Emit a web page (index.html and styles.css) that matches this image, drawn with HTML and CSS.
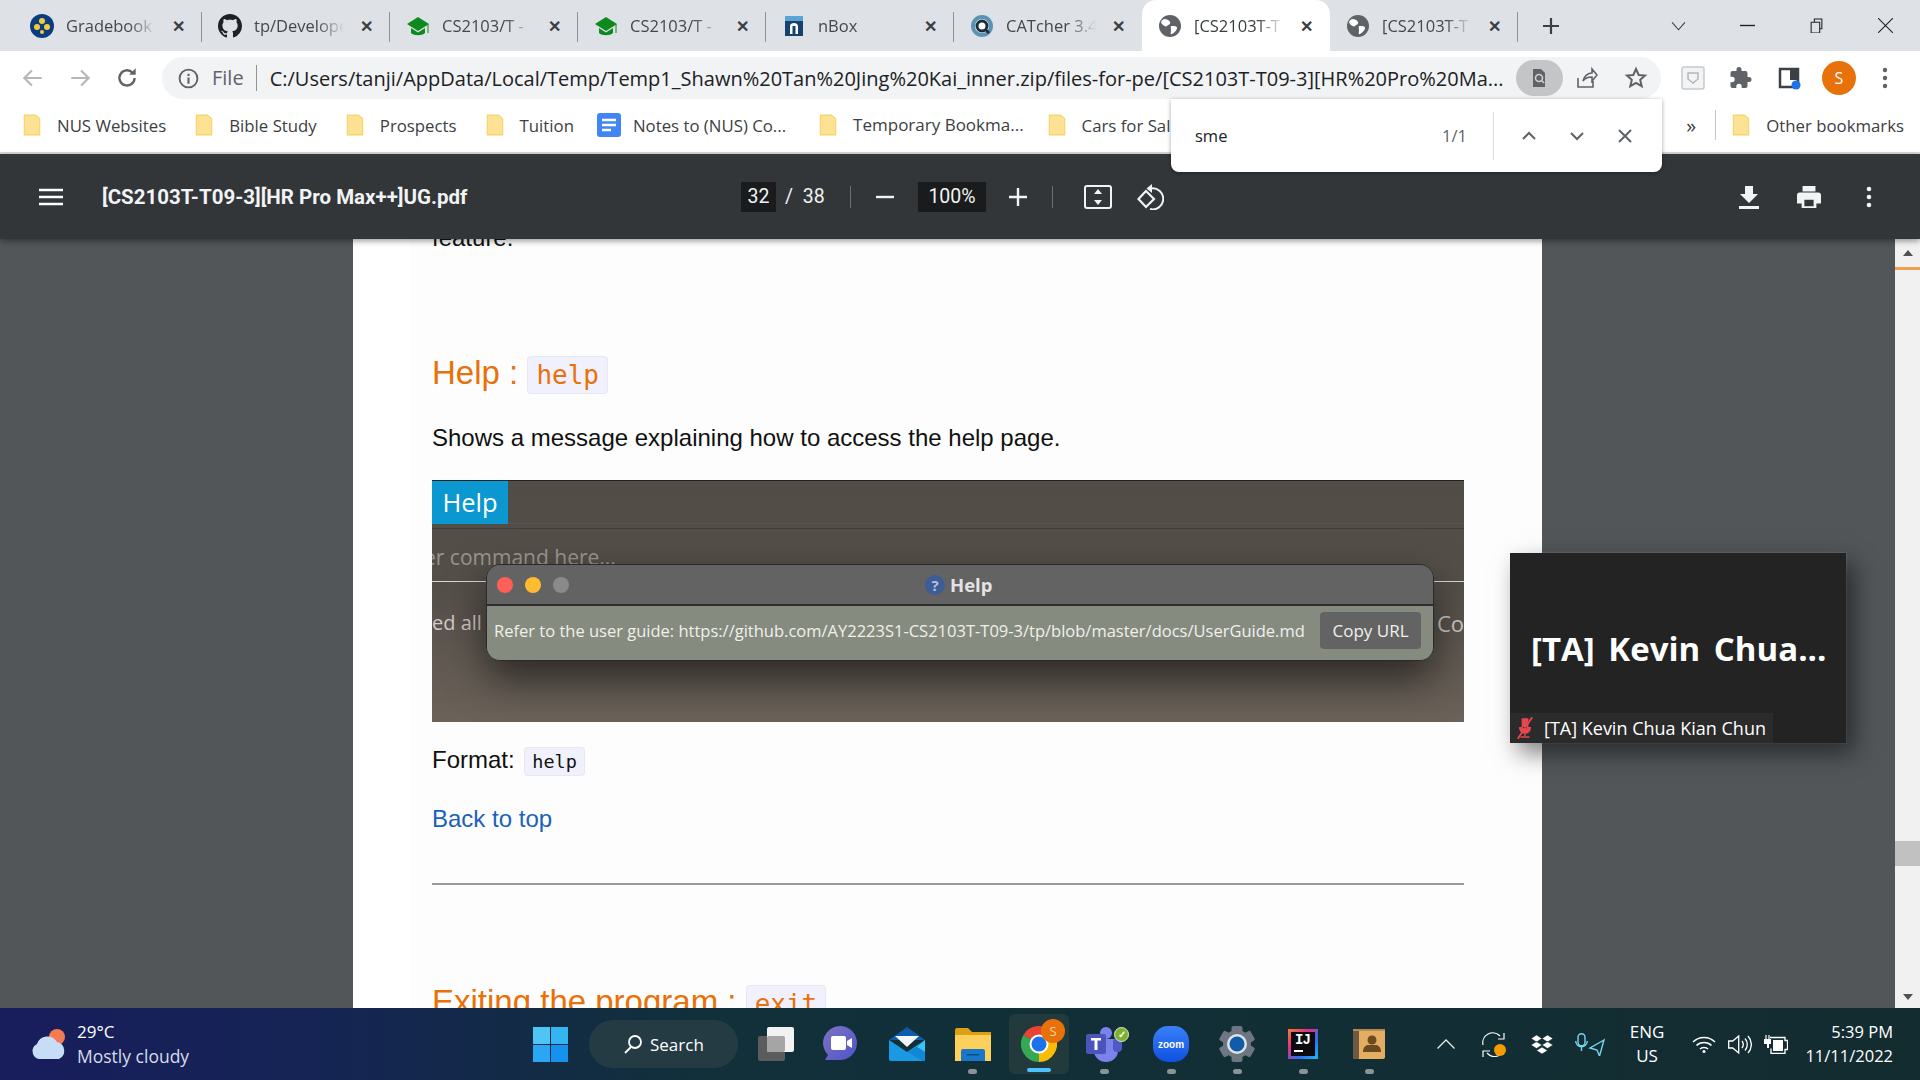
FILE: index.html

```html
<!DOCTYPE html>
<html lang="en">
<head>
    <meta charset="UTF-8" />
    <meta name="viewport" content="width=device-width, initial-scale=1.0"/>
    <title>[CS2103T-T09-3][HR Pro Max++]UG.pdf</title>
    <link rel="stylesheet" href="styles.css">
</head>
<body>

<!-- tab strip -->
<div class="tabstrip">
    <div class="tab sep">
        <svg class="fav" viewBox="0 0 24 24"><circle cx="12" cy="12" r="12" fill="#0b3c7d"/><circle cx="12" cy="7" r="3" fill="#f5c842"/><circle cx="7" cy="13" r="3" fill="#f5c842"/><circle cx="17" cy="13" r="3" fill="#f5c842"/><circle cx="12" cy="18" r="2" fill="#f5c842"/></svg>
        <span class="tab-title">Gradebook</span><span class="tab-x">✕</span>
    </div>
    <div class="tab sep">
        <svg class="fav" viewBox="0 0 16 16"><path fill="#202124" d="M8 0C3.58 0 0 3.58 0 8c0 3.54 2.29 6.53 5.47 7.59.4.07.55-.17.55-.38 0-.19-.01-.82-.01-1.49-2.01.37-2.53-.49-2.69-.94-.09-.23-.48-.94-.82-1.13-.28-.15-.68-.52-.01-.53.63-.01 1.08.58 1.23.82.72 1.21 1.87.87 2.33.66.07-.52.28-.87.51-1.07-1.78-.2-3.64-.89-3.64-3.95 0-.87.31-1.59.82-2.15-.08-.2-.36-1.02.08-2.12 0 0 .67-.21 2.2.82.64-.18 1.32-.27 2-.27s1.36.09 2 .27c1.53-1.04 2.2-.82 2.2-.82.44 1.1.16 1.92.08 2.12.51.56.82 1.27.82 2.15 0 3.07-1.87 3.75-3.65 3.95.29.25.54.73.54 1.48 0 1.07-.01 1.93-.01 2.2 0 .21.15.46.55.38A8.01 8.01 0 0 0 16 8c0-4.42-3.58-8-8-8z"/></svg>
        <span class="tab-title">tp/Develope</span><span class="tab-x">✕</span>
    </div>
    <div class="tab sep">
        <svg class="fav" viewBox="0 0 24 24"><path fill="#0c8a1e" d="M12 3 1 10l11 7 11-7z"/><path fill="#0c8a1e" d="M5 14v5c3 3 11 3 14 0v-5l-7 4.500z"/><path d="M22 10v9" stroke="#0c8a1e"/></svg>
        <span class="tab-title">CS2103/T -</span><span class="tab-x">✕</span>
    </div>
    <div class="tab sep">
        <svg class="fav" viewBox="0 0 24 24"><path fill="#0c8a1e" d="M12 3 1 10l11 7 11-7z"/><path fill="#0c8a1e" d="M5 14v5c3 3 11 3 14 0v-5l-7 4.500z"/><path d="M22 10v9" stroke="#0c8a1e"/></svg>
        <span class="tab-title">CS2103/T -</span><span class="tab-x">✕</span>
    </div>
    <div class="tab sep">
        <svg class="fav" viewBox="0 0 24 24"><path fill="#17426d" d="M3 2h18v20H3z"/><path fill="#5ba4d6" d="M3 2h18v5H3z"/><path fill="#fff" d="M8 20v-8c0-2 2-3 4-3s4 1 4 3v8h-2.500v-8h-3v8z"/></svg>
        <span class="tab-title">nBox</span><span class="tab-x">✕</span>
    </div>
    <div class="tab">
        <svg class="fav" viewBox="0 0 24 24"><circle cx="12" cy="12" r="11" fill="#5b93b5"/><circle cx="12" cy="12" r="7" fill="#fff"/><circle cx="12" cy="12" r="5" fill="none" stroke="#1d2b36" stroke-width="3"/><path d="m15 15 4 4" stroke="#1d2b36" stroke-width="2.500"/></svg>
        <span class="tab-title">CATcher 3.4</span><span class="tab-x">✕</span>
    </div>
    <div class="tab active">
        <svg class="fav" viewBox="0 0 24 24"><circle cx="12" cy="12" r="11" fill="#5f6368"/><path fill="#fff" d="M6 5c3 0 5 1 6 3s-2 3-3 4-3 0-5-2 0-4 2-5zm8 7c2 0 5 0 5 2s-3 5-5 6-1-2-1-4-1-4 1-4z"/></svg>
        <span class="tab-title">[CS2103T-T</span><span class="tab-x">✕</span>
    </div>
    <div class="tab sep">
        <svg class="fav" viewBox="0 0 24 24"><circle cx="12" cy="12" r="11" fill="#5f6368"/><path fill="#fff" d="M6 5c3 0 5 1 6 3s-2 3-3 4-3 0-5-2 0-4 2-5zm8 7c2 0 5 0 5 2s-3 5-5 6-1-2-1-4-1-4 1-4z"/></svg>
        <span class="tab-title">[CS2103T-T</span><span class="tab-x">✕</span>
    </div>
    <svg class="newtab" viewBox="0 0 18 18"><path d="M9 1v16M1 9h16" stroke="#3c4043" stroke-width="2.200"/></svg>
    <div class="winctl">
        <svg viewBox="0 0 14 14"><path d="m1 4 6 7 6-7" fill="none" stroke="#3c4043"/></svg>
        <svg viewBox="0 0 14 14"><path d="M0 7h14" stroke="#202124" stroke-width="1.300"/></svg>
        <svg viewBox="0 0 14 14"><path d="M2 4h8v10H2zM5 4V1h7v9h-2" fill="none" stroke="#202124"/></svg>
        <svg viewBox="0 0 14 14"><path d="m0 0 14 14M14 0 0 14" stroke="#202124"/></svg>
    </div>
</div>

<!-- address bar -->
<div class="toolbar">
    <svg class="navbtn" viewBox="0 0 24 24"><path d="M20 12H5m6-7-7 7 7 7" fill="none" stroke="#b4b7bb" stroke-width="2"/></svg>
    <svg class="navbtn" viewBox="0 0 24 24"><path d="M4 12h15m-6-7 7 7-7 7" fill="none" stroke="#b4b7bb" stroke-width="2"/></svg>
    <svg class="navbtn" viewBox="0 0 24 24"><path d="M19 12a7 7 0 1 1-2-5" fill="none" stroke="#5f6368" stroke-width="2.200"/><path d="M20 3v6h-6z" fill="#5f6368"/></svg>
    <div class="omnibox">
        <svg class="info" viewBox="0 0 20 20"><circle cx="10" cy="10" r="8.500" fill="none" stroke="#5f6368" stroke-width="1.800"/><path d="M10 9v6M10 5.500v2" stroke="#5f6368" stroke-width="2"/></svg>
        <span class="scheme">File</span>
        <span class="url">C:/Users/tanji/AppData/Local/Temp/Temp1_Shawn%20Tan%20Jing%20Kai_inner.zip/files-for-pe/[CS2103T-T09-3][HR%20Pro%20Ma...</span>
        <span class="lens"><svg viewBox="0 0 20 20"><path d="M4 1h8l4 4v14H4z" fill="#5f6368"/><circle cx="10" cy="10" r="3.500" fill="none" stroke="#d0d1d3" stroke-width="1.600"/><path d="m12.500 12.500 2.500 2.500" stroke="#d0d1d3" stroke-width="1.600"/></svg></span>
        <svg class="omni-ic share" viewBox="0 0 24 24"><path d="M4 12v9h15v-6M9 15c1-5 5-8 9-8V3l5 6-5 6v-4c-4 0-7 1-9 4z" fill="none" stroke="#5f6368" stroke-width="1.600"/></svg>
        <svg class="omni-ic star" viewBox="0 0 24 24"><path d="m12 3 2.700 6 6.300.6-4.800 4.200 1.500 6.400L12 17l-5.700 3.200 1.500-6.400L3 9.600 9.300 9z" fill="none" stroke="#5f6368" stroke-width="2"/></svg>
    </div>
    <div class="ext">
        <svg viewBox="0 0 24 24"><rect x="1" y="1" width="22" height="22" rx="2" fill="#f1f3f4" stroke="#c6c9cc" stroke-width="1.500"/><path d="M7 7h10v6l-5 4-5-4z" fill="none" stroke="#b4b7bb" stroke-width="1.500"/></svg>
        <svg viewBox="0 0 24 24"><path fill="#5f6368" d="M20 11h-1.500V7a2 2 0 0 0-2-2h-4V3.500a2.500 2.500 0 0 0-5 0V5h-4a2 2 0 0 0-2 2v3.800H3a2.700 2.700 0 0 1 0 5.400H1.500V20a2 2 0 0 0 2 2h3.800v-1.500a2.700 2.700 0 0 1 5.400 0V22h3.800a2 2 0 0 0 2-2v-4H20a2.500 2.500 0 0 0 0-5z"/></svg>
        <svg viewBox="0 0 24 24"><path d="M3 3h18v18H3z" fill="none" stroke="#3c4043" stroke-width="2.500"/><path d="M13 3h8v11h-8z" fill="#3c4043"/><circle cx="19" cy="19" r="4.500" fill="#1a73e8"/></svg>
        <span class="avatar">S</span>
        <svg class="dots" viewBox="0 0 6 24"><circle cx="3" cy="4" r="2.200" fill="#5f6368"/><circle cx="3" cy="12" r="2.200" fill="#5f6368"/><circle cx="3" cy="20" r="2.200" fill="#5f6368"/></svg>
    </div>
</div>

<!-- bookmarks -->
<div class="bookmarks">
    <span class="bm"><svg class="folder" viewBox="0 0 16 20"><path d="M1 1h10l4 3v15H1z" fill="#fde293" stroke="#f5d36c"/></svg>NUS Websites</span>
    <span class="bm"><svg class="folder" viewBox="0 0 16 20"><path d="M1 1h10l4 3v15H1z" fill="#fde293" stroke="#f5d36c"/></svg>Bible Study</span>
    <span class="bm"><svg class="folder" viewBox="0 0 16 20"><path d="M1 1h10l4 3v15H1z" fill="#fde293" stroke="#f5d36c"/></svg>Prospects</span>
    <span class="bm tuition"><svg class="folder" viewBox="0 0 16 20"><path d="M1 1h10l4 3v15H1z" fill="#fde293" stroke="#f5d36c"/></svg>Tuition</span>
    <span class="bm notes"><svg class="doc" viewBox="0 0 24 24"><rect width="24" height="24" rx="3" fill="#4285f4"/><path d="M5 7h14M5 12h14M5 17h9" stroke="#fff" stroke-width="2.500"/></svg>Notes to (NUS) Co...</span>
    <span class="bm temp"><svg class="folder" viewBox="0 0 16 20"><path d="M1 1h10l4 3v15H1z" fill="#fde293" stroke="#f5d36c"/></svg>Temporary Bookma...</span>
    <span class="bm"><svg class="folder" viewBox="0 0 16 20"><path d="M1 1h10l4 3v15H1z" fill="#fde293" stroke="#f5d36c"/></svg>Cars for Sal</span>
    <span class="bm-more">»</span>
    <span class="bm-sep"></span>
    <span class="bm other"><svg class="folder" viewBox="0 0 16 20"><path d="M1 1h10l4 3v15H1z" fill="#fde293" stroke="#f5d36c"/></svg>Other bookmarks</span>
</div>

<!-- find in page -->
<div class="findbar">
    <span class="find-q">sme</span>
    <span class="find-n">1/1</span>
    <span class="find-sep"></span>
    <svg viewBox="0 0 16 16"><path d="m2 11 6-6 6 6" fill="none" stroke="#5f6368" stroke-width="2"/></svg>
    <svg viewBox="0 0 16 16"><path d="m2 5 6 6 6-6" fill="none" stroke="#5f6368" stroke-width="2"/></svg>
    <svg viewBox="0 0 16 16"><path d="m2 2 12 12M14 2 2 14" stroke="#5f6368" stroke-width="2"/></svg>
</div>

<!-- pdf toolbar -->
<div class="pdfbar">
    <svg class="pdf-menu" viewBox="0 0 24 18"><path d="M0 2h24M0 9h24M0 16h24" stroke="#fff" stroke-width="2.500"/></svg>
    <span class="pdf-title">[CS2103T-T09-3][HR Pro Max++]UG.pdf</span>
    <span class="pdf-box page-no">32</span>
    <span class="pdf-total">/&nbsp; 38</span>
    <span class="pdf-sep first"></span>
    <svg class="pdf-ic minus" viewBox="0 0 18 18"><path d="M0 9h18" stroke="#f1f3f4" stroke-width="2.400"/></svg>
    <span class="pdf-box zoom">100%</span>
    <svg class="pdf-ic plus" viewBox="0 0 18 18"><path d="M0 9h18M9 0v18" stroke="#f1f3f4" stroke-width="2.400"/></svg>
    <span class="pdf-sep second"></span>
    <svg class="pdf-ic fit" viewBox="0 0 28 24"><rect x="1" y="1" width="26" height="22" rx="2" fill="none" stroke="#f1f3f4" stroke-width="2"/><path d="m14 4 4 5h-8zM14 20l4-5h-8z" fill="#f1f3f4"/></svg>
    <svg class="pdf-ic rotate" viewBox="0 0 27 26"><path d="M9 7 1.500 15 9 23l8-8z" fill="none" stroke="#f1f3f4" stroke-width="2.200"/><path d="M14 4.500A10.500 10.500 0 1 1 13 25" fill="none" stroke="#f1f3f4" stroke-width="2"/><path d="M15 0 9.500 4.500 15 9z" fill="#f1f3f4"/></svg>
    <span class="pdf-spacer"></span>
    <svg class="pdf-ic right" viewBox="0 0 22 24"><path d="M7 1h8v8h5L11 18 2 9h5zM1 21h20v3H1z" fill="#f1f3f4"/></svg>
    <svg class="pdf-ic right print" viewBox="0 0 26 24"><path d="M6 0h14v6H6zM3 7h20a3 3 0 0 1 3 3v9h-5v5H5v-5H0v-9a3 3 0 0 1 3-3z" fill="#f1f3f4"/><path d="M8 15h10v7H8z" fill="#323639"/></svg>
    <svg class="pdf-ic dots-w" viewBox="0 0 6 24"><circle cx="3" cy="4" r="2.300" fill="#f1f3f4"/><circle cx="3" cy="12" r="2.300" fill="#f1f3f4"/><circle cx="3" cy="20" r="2.300" fill="#f1f3f4"/></svg>
</div>

<!-- document -->
<div class="viewer">
    <div class="gutter">
        <div class="page">
            <div class="page-inner">
                <p class="prev">feature:</p>
                <h2 class="h-first">Help : <code>help</code></h2>
                <p class="lead">Shows a message explaining how to access the help page.</p>
                <div class="shot">
                    <div class="shot-top"><span class="shot-tag">Help</span></div>
                    <div class="shot-cmd"><span>er command here...</span></div>
                    <div class="shot-res"><span class="res-l">ed all</span><span class="res-r">Co</span></div>
                    <div class="dialog">
                        <div class="dlg-title">
                            <span class="light red"></span><span class="light amber"></span><span class="light grey"></span>
                            <span class="dlg-name"><span class="dlg-q">?</span> Help</span>
                        </div>
                        <div class="dlg-body">
                            <span class="dlg-text">Refer to the user guide: https://github.com/AY2223S1-CS2103T-T09-3/tp/blob/master/docs/UserGuide.md</span>
                            <span class="dlg-btn">Copy URL</span>
                        </div>
                    </div>
                </div>
                <p class="format">Format: <code>help</code></p>
                <p class="back"><a href="#">Back to top</a></p>
                <hr>
                <h2 class="h-next">Exiting the program : <code>exit</code></h2>
            </div>
        </div>
    </div>
    <div class="scrollbar">
        <svg class="sb-arrow" viewBox="0 0 10 6"><path d="M5 0 10 6H0z" fill="#505050"/></svg>
        <span class="sb-mark"></span>
        <span class="sb-thumb"></span>
        <svg class="sb-arrow down" viewBox="0 0 10 6"><path d="M5 6 10 0H0z" fill="#505050"/></svg>
    </div>
    <div class="zoomtile">
        <div class="tile-name">[TA] Kevin Chua...</div>
        <div class="tile-label">
            <svg viewBox="0 0 20 24"><path d="M7 2h6v11H7zM4 11c0 9 12 9 12 0M10 18v3M5 22h10" fill="#e5484d" stroke="#e5484d" stroke-width="1.500"/><path d="M18 0 2 24" stroke="#e5484d" stroke-width="2"/></svg>
            [TA] Kevin Chua Kian Chun
        </div>
    </div>
</div>

<!-- taskbar -->
<div class="taskbar">
    <div class="weather">
        <svg viewBox="0 0 38 34"><circle cx="27" cy="10" r="8" fill="#f47b4f"/><path d="M9 32a8 8 0 0 1-2-15 11 11 0 0 1 20-2 9 9 0 0 1 2 17z" fill="#c7dcf7"/></svg>
        <div class="weather-text"><div class="temp">29°C</div><div class="cond">Mostly cloudy</div></div>
    </div>
    <div class="task-center">
        <svg class="win" viewBox="0 0 35 35"><path d="M0 0h17v17H0z" fill="#4ec5f5"/><path d="M18 0h17v17H18z" fill="#35b4f2"/><path d="M0 18h17v17H0z" fill="#2ba6f2"/><path d="M18 18h17v17H18z" fill="#1591ee"/></svg>
        <div class="search"><svg viewBox="0 0 20 20"><circle cx="12" cy="8" r="6" fill="none" stroke="#fff" stroke-width="1.800"/><path d="m8 13-6 6" stroke="#fff" stroke-width="1.800"/></svg>Search</div>
        <span class="app app-view"><svg viewBox="0 0 36 34"><rect y="9" width="27" height="25" rx="2" fill="#5c5c5c"/><rect x="9" width="27" height="25" rx="2" fill="#f2f2f2"/><rect x="9" y="9" width="18" height="16" rx="2" fill="#a5a5a5"/></svg></span>
        <span class="app app-meet"><svg viewBox="0 0 34 36"><defs><linearGradient id="meetFill" x1="0" y1="0" x2="1" y2="1"><stop offset="0" stop-color="#7c72c4"/><stop offset="1" stop-color="#4f55c8"/></linearGradient></defs><path d="M17 0a17 17 0 0 1 0 34H2l3-5A17 17 0 0 1 17 0z" fill="url(#meetFill)"/><rect x="8" y="10" width="15" height="14" rx="2" fill="#fff"/><path d="m24 15 5-3v10l-5-3z" fill="#fff"/></svg></span>
        <span class="app app-mail"><svg viewBox="0 0 36 34"><path d="M0 13 18 0l18 13z" fill="#0b5cab"/><path d="M6 9h24L18 20z" fill="#f2f6fa"/><path d="M0 13l18 12 18-12v19a2 2 0 0 1-2 2H2a2 2 0 0 1-2-2z" fill="#1a9ae4"/><path d="M36 13v12l-8-5z" fill="#38c6f5"/><path d="M18 25l10-5 8 5v9H34z" fill="#1088d6"/></svg></span>
        <span class="app app-files"><svg viewBox="0 0 36 33"><path d="M0 2a2 2 0 0 1 2-2h11l4 4h19v6H0z" fill="#dd9f14"/><path d="M0 7h36v26H0z" fill="#fcd05a"/><path d="M6 23a2 2 0 0 1 2-2h20a2 2 0 0 1 2 2v10H6z" fill="#1878c8"/><path d="M12 26h12v1.500H12z" fill="#0c4c8c"/></svg><i class="dot"></i></span>
        <span class="app app-chrome">
            <svg viewBox="0 0 36 36"><path d="M18 18 2.400 9A18 18 0 0 1 33.600 9z" fill="#ea4335"/><path d="M18 18 33.600 9A18 18 0 0 1 18 36z" fill="#fbbc04"/><path d="M18 18V36A18 18 0 0 1 2.400 9z" fill="#34a853"/><circle cx="18" cy="18" r="9.500" fill="#fff"/><circle cx="18" cy="18" r="7.500" fill="#1a73e8"/></svg>
            <b class="chrome-badge">S</b>
            <i class="bar"></i>
        </span>
        <span class="app app-teams"><svg viewBox="0 0 36 36"><circle cx="20" cy="7" r="6" fill="#7b83eb"/><path d="M8 13h24v12a12 11 0 0 1-24 0z" fill="#7b83eb"/><rect x="27" y="12" width="9" height="14" rx="4" fill="#5059c9"/><rect y="8" width="20" height="20" rx="2" fill="#4b53bc"/><path d="M5 12h10v2.500h-3.500V24h-3v-9.500H5z" fill="#fff"/></svg><b class="teams-ok">✓</b><i class="dot"></i></span>
        <span class="app app-zoom"><svg viewBox="0 0 36 36"><defs><linearGradient id="zoomFill" x1="0" y1="0" x2="0" y2="1"><stop offset="0" stop-color="#3a80fa"/><stop offset="1" stop-color="#0f50e0"/></linearGradient></defs><rect width="36" height="36" rx="15" fill="url(#zoomFill)"/></svg><b class="zoom-text">zoom</b><i class="dot"></i></span>
        <span class="app app-gear"><svg viewBox="0 0 36 36"><g fill="#6e7781"><circle cx="18" cy="18" r="14"/><rect x="12.500" width="11" height="36" rx="2"/><rect x="12.500" width="11" height="36" rx="2" transform="rotate(60 18 18)"/><rect x="12.500" width="11" height="36" rx="2" transform="rotate(120 18 18)"/></g><circle cx="18" cy="18" r="10" fill="#dfe3e6"/><circle cx="18" cy="18" r="7.500" fill="#0f5cab"/></svg><i class="dot"></i></span>
        <span class="app app-ij"><svg viewBox="0 0 30 30"><defs><linearGradient id="ijFill" x1="0" y1="0" x2="1" y2="1"><stop offset="0" stop-color="#f08030"/><stop offset="0.350" stop-color="#e02f84"/><stop offset="0.650" stop-color="#2b6ff0"/><stop offset="1" stop-color="#22b8f0"/></linearGradient></defs><rect width="30" height="30" fill="url(#ijFill)"/><rect x="3" y="3" width="24" height="24" fill="#0c0c10"/><rect x="6" y="21" width="9" height="2" fill="#fff"/></svg><b class="ij-text">IJ</b><i class="dot"></i></span>
        <span class="app app-book"><svg viewBox="0 0 32 30"><rect width="32" height="30" rx="2" fill="#e3ad62"/><rect width="6" height="30" rx="1" fill="#6e5a42"/><rect width="32" height="2" fill="#b58a50"/><circle cx="19" cy="11" r="4.500" fill="#6b4a22"/><path d="M10 23c0-5 3-7 5-7h8c2 0 5 2 5 7z" fill="#6b4a22"/></svg><i class="dot"></i></span>
    </div>
    <div class="tray">
        <svg class="tray-ic chev" viewBox="0 0 18 10"><path d="m.5 9.500 8.500-8.500 8.500 8.500" fill="none" stroke="#e8eaed" stroke-width="1.300"/></svg>
        <svg class="tray-ic sync" viewBox="0 0 24 25"><path d="M1 13A10 10 0 0 1 18 4M17 23.500A10 10 0 0 1 5 21" fill="none" stroke="#fff" stroke-width="1.200"/><path d="M22 1v6h-6M1 25v-6h7" fill="none" stroke="#fff" stroke-width="1.200"/><circle cx="18" cy="18" r="6" fill="#f59b00"/></svg>
        <svg class="tray-ic drop" viewBox="0 0 22 19"><path d="m5.500 0 5.500 3.500L5.500 7 0 3.500zM16.500 0 22 3.500 16.500 7 11 3.500zM5.500 6.500 11 10l-5.500 3.500L0 10zM16.500 6.500 22 10l-5.500 3.500L11 10zM11 12l5.500 3.500L11 19l-5.500-3.500z" fill="#fff" stroke="#132c30" stroke-width="0.600"/></svg>
        <svg class="tray-ic micloc" viewBox="0 0 30 23"><rect x="3" y="0.800" width="7" height="12" rx="3.500" fill="none" stroke="#78d6ef" stroke-width="1.400"/><path d="M.7 8a5.800 5.800 0 0 0 11.600 0M6.500 14v4" fill="none" stroke="#78d6ef" stroke-width="1.400"/><path d="M29 7 15 15l7 2 2.500 6z" fill="none" stroke="#78d6ef" stroke-width="1.400"/></svg>
        <div class="lang">ENG<br>US</div>
        <svg class="tray-ic wifi" viewBox="0 0 24 17"><path d="M1 6c6-6 16-6 22 0M4.500 9.500c4-4 11-4 15 0M8 13c2-2 6-2 8 0" fill="none" stroke="#fff" stroke-width="1.500"/><circle cx="12" cy="15.500" r="1.500" fill="#fff"/></svg>
        <svg class="tray-ic vol" viewBox="0 0 24 19"><path d="M.7 6h4l6-5v17l-6-5h-4z" fill="none" stroke="#fff" stroke-width="1.300"/><path d="M14 6c1.500 2 1.500 5 0 7M17 3.500c3 3.500 3 8.500 0 12M20 1c4.500 5 4.500 12 0 17" fill="none" stroke="#fff" stroke-width="1.300"/></svg>
        <svg class="tray-ic batt" viewBox="0 0 24 19"><path d="M2 0v4M5 0v4" stroke="#fff" stroke-width="1.200"/><path d="M0 4h7v5H5v4H3V9H0z" fill="#fff"/><path d="M6 2.500h15v3h2.500v9H21v4H7v-5" fill="none" stroke="#fff" stroke-width="1.300"/><rect x="9" y="5" width="10" height="11" fill="#fff"/></svg>
        <div class="clock">5:39 PM<br>11/11/2022</div>
    </div>
</div>

</body>
</html>
```

FILE: styles.css

```css
* {
    box-sizing: border-box;
}
html, body {
    margin: 0;
    height: 1080px;
    width: 1920px;
    overflow: hidden;
}
body {
    position: relative;
    display: flex;
    flex-direction: column;
    font-family: "Open Sans", "Noto Sans", sans-serif;
    color: #202124;
    background-color: white;
}
svg {
    flex: none;
    display: block;
}

/* tabs */
.tabstrip {
    height: 51px;
    background-color: #dee1e6;
    display: flex;
    padding-left: 14px;
    align-items: flex-end;
    flex: none;
}
.tab {
    width: 188px;
    height: 51px;
    display: flex;
    align-items: center;
    padding: 0 17px 0 16px;
    font-size: 16.500px;
    color: #45474a;
    position: relative;
}
.tab.sep::after {
    content: "";
    position: absolute;
    right: 0;
    top: 12px;
    height: 30px;
    width: 1px;
    background-color: #8f9296;
}
.tab.active {
    background-color: white;
    border-radius: 14px 14px 0 0;
    color: #3c4043;
}
.fav {
    width: 24px;
    height: 24px;
    margin-right: 12px;
}
.tab-title {
    width: 90px;
    white-space: nowrap;
    overflow: hidden;
    -webkit-mask-image: linear-gradient(to right, black 70%, transparent 100%);
    mask-image: linear-gradient(to right, black 70%, transparent 100%);
}
.tab-x {
    margin-left: auto;
    font-size: 16px;
    color: #3c4043;
    font-weight: 700;
}
.newtab {
    width: 18px;
    height: 18px;
    margin: 0 0 16px 24px;
}
.winctl {
    margin-left: auto;
    height: 51px;
    display: flex;
    align-items: center;
    gap: 54px;
    padding-right: 27px;
}
.winctl svg {
    width: 15px;
    height: 15px;
}

/* address bar */
.toolbar {
    height: 49px;
    padding-top: 6px;
    background-color: white;
    display: flex;
    flex: none;
    align-items: flex-start;
    padding-left: 20px;
}
.navbtn {
    width: 26px;
    height: 26px;
    margin: 8px 21px 0 0;
}
.omnibox {
    width: 1499px;
    margin-left: 1px;
    height: 42px;
    border-radius: 21px;
    background-color: #f1f3f4;
    display: flex;
    align-items: center;
    padding-left: 16px;
    font-size: 20px;
}
.info {
    width: 21px;
    height: 21px;
}
.scheme {
    margin-left: 13px;
    color: #5f6368;
    padding-right: 12px;
    border-right: 1px solid #8f9296;
    line-height: 26px;
}
.url {
    margin-left: 13px;
    white-space: nowrap;
    width: 1237px;
    overflow: hidden;
}
.lens {
    margin-left: 9px;
    width: 47px;
    height: 36px;
    border-radius: 18px;
    background-color: #c4c5c7;
    display: flex;
    align-items: center;
    justify-content: center;
}
.lens svg {
    width: 20px;
    height: 20px;
}
.omni-ic {
    width: 24px;
    height: 24px;
}
.share {
    margin-left: 11px;
}
.star {
    margin-left: 26px;
}
.ext {
    display: flex;
    align-items: center;
    height: 42px;
    margin-left: 20px;
}
.ext svg {
    width: 24px;
    height: 24px;
    margin-right: 24px;
}
.avatar {
    width: 34px;
    height: 34px;
    border-radius: 50%;
    background-color: #e8710a;
    color: white;
    font-size: 16px;
    text-align: center;
    line-height: 34px;
    margin-left: -3px;
    margin-right: 26px;
}
.ext .dots {
    width: 6px;
    margin: 0;
}

/* bookmarks */
.bookmarks {
    height: 54px;
    background-color: white;
    display: flex;
    align-items: center;
    padding: 0 0 2px 23px;
    font-size: 16.800px;
    color: #3c4043;
    flex: none;
    border-bottom: 2px solid #dadce0;
}
.bm {
    display: flex;
    align-items: center;
    white-space: nowrap;
    margin-right: 29px;
}
.tuition {
    margin-right: 23px;
}
.notes {
    margin-right: 33px;
}
.temp {
    margin-right: 24px;
}
.folder {
    width: 18px;
    height: 22px;
    margin-right: 16px;
}
.doc {
    width: 24px;
    height: 24px;
    margin-right: 12px;
}
.bm-more {
    margin-left: auto;
    font-size: 20px;
}
.bm-sep {
    width: 1px;
    height: 30px;
    margin-left: 19px;
    background-color: #c4c6c9;
}
.bm.other {
    margin: 0 16px 0 16px;
}

/* find bar */
.findbar {
    position: absolute;
    left: 1171px;
    top: 99px;
    width: 491px;
    height: 73px;
    background-color: white;
    border-radius: 0 0 8px 8px;
    box-shadow: 0 1px 4px rgba(0, 0, 0, 0.35);
    display: flex;
    align-items: center;
    padding-left: 24px;
    font-size: 16.500px;
    z-index: 5;
}
.find-q {
    flex: none;
    width: 247px;
}
.find-n {
    flex: none;
    color: #5f6368;
    width: 51px;
}
.find-sep {
    flex: none;
    width: 1px;
    height: 48px;
    background-color: #dadce0;
    margin-right: 27px;
}
.findbar svg {
    width: 16px;
    height: 16px;
    margin-right: 32px;
}
.findbar svg:last-child {
    margin-right: 0;
}

/* pdf toolbar */
.pdfbar {
    height: 85px;
    background-color: #323639;
    color: #f1f3f4;
    display: flex;
    flex: none;
    align-items: center;
    font-family: Roboto, "Liberation Sans", sans-serif;
    box-shadow: 0 2px 6px rgba(0, 0, 0, 0.4);
    position: relative;
    z-index: 2;
}
.pdf-menu {
    width: 24px;
    height: 18px;
    margin-left: 39px;
}
.pdf-title {
    width: 639px;
    margin-left: 39px;
    font-size: 20.500px;
    font-weight: 700;
    white-space: nowrap;
}
.pdf-box {
    background-color: #191b1c;
    height: 30px;
    line-height: 30px;
    font-size: 19.500px;
    text-align: center;
}
.page-no {
    width: 35px;
}
.pdf-total {
    width: 65px;
    margin-left: 9px;
    font-size: 19.500px;
}
.pdf-sep {
    width: 1px;
    height: 22px;
    background-color: #6a6e71;
}
.pdf-ic {
    width: 18px;
    height: 18px;
}
.minus {
    margin-left: 25px;
}
.zoom {
    width: 68px;
    margin-left: 24px;
}
.plus {
    margin-left: 23px;
}
.second {
    margin-left: 25px;
}
.fit {
    width: 28px;
    height: 24px;
    margin-left: 31px;
}
.rotate {
    width: 27px;
    height: 26px;
    margin-left: 25px;
}
.pdf-spacer {
    flex: 1;
}
.pdf-ic.right {
    width: 24px;
    height: 24px;
    margin-right: 36px;
}
.pdf-ic.right.print {
    margin-right: 45px;
}
.dots-w {
    width: 6px;
    height: 24px;
    margin-right: 48px;
}

/* document */
.viewer {
    height: 769px;
    flex: none;
    display: flex;
    position: relative;
    overflow: hidden;
}
.gutter {
    width: 1895px;
    background-color: #525659;
    overflow: hidden;
}
.page {
    width: 1189px;
    height: 769px;
    margin-left: 353px;
    background: linear-gradient(to right, white 57px, #fdfdfd 57px);
    overflow: hidden;
    font-family: "Liberation Sans", Arial, sans-serif;
    font-size: 24px;
    color: #111;
}
.page-inner {
    margin-left: 79px;
    width: 1032px;
}
.page p {
    margin: 0;
}
.prev {
    margin-top: -15px !important;
    line-height: 28px;
}
h2 {
    font-weight: 400;
    font-size: 33px;
    color: #e8710a;
    margin: 0;
}
code {
    font-family: "DejaVu Sans Mono", monospace;
    background-color: #f1f0fd;
    border: 1px solid #e8e8f0;
    border-radius: 4px;
}
h2 code {
    font-size: 26px;
    padding: 3px 8px;
}
.h-first {
    margin-top: 102px;
    line-height: 37px;
}
.lead {
    margin-top: 30px !important;
    line-height: 28px;
}
.shot {
    margin-top: 28px;
    height: 242px;
    position: relative;
    overflow: hidden;
    background: linear-gradient(#524c46, #554f49 45%, #6b6259);
    color: #b9b5b0;
    border-top: 1px solid #222;
}
.shot-top {
    height: 43px;
    border-bottom: 1px solid #5a544e;
}
.shot-tag {
    display: block;
    width: 76px;
    height: 43px;
    background-color: #0b97cf;
    color: white;
    font-size: 25.500px;
    line-height: 43px;
    text-align: center;
    font-family: "Open Sans", sans-serif;
}
.shot-cmd {
    margin-top: 4px;
    height: 54px;
    border-top: 1px solid #453e38;
    border-bottom: 1px solid #d8d8d8;
    font-size: 21px;
    line-height: 56px;
    font-family: "Open Sans", sans-serif;
    overflow: hidden;
    color: #9a9691;
}
.shot-cmd span {
    margin-left: -8px;
}
.shot-res {
    display: flex;
    justify-content: space-between;
    font-size: 20px;
    font-family: "Open Sans", sans-serif;
    line-height: 30px;
    margin-top: 26px;
    color: #d0ccc7;
}
.res-r {
    font-size: 22px;
}
.dialog {
    position: absolute;
    left: 54px;
    top: 83px;
    width: 948px;
    height: 97px;
    border-radius: 14px;
    overflow: hidden;
    border: 1px solid #2a2a2a;
    box-shadow: 0 18px 40px rgba(0, 0, 0, 0.55);
    font-family: "Open Sans", sans-serif;
}
.dlg-title {
    height: 41px;
    background-color: #636363;
    border-bottom: 2px solid #2f2f2f;
    display: flex;
    align-items: center;
    padding-left: 10px;
    gap: 12px;
    position: relative;
}
.light {
    width: 16px;
    height: 16px;
    border-radius: 50%;
}
.red {
    background-color: #ff5f57;
}
.amber {
    background-color: #febc2e;
}
.grey {
    background-color: #8a8a8a;
}
.dlg-name {
    position: absolute;
    left: 438px;
    font-size: 18.500px;
    font-weight: 700;
    color: #e3e3e3;
    display: flex;
    align-items: center;
    gap: 5px;
}
.dlg-q {
    width: 20px;
    height: 20px;
    border-radius: 50%;
    background-color: #3e5c96;
    font-size: 15px;
    line-height: 20px;
    text-align: center;
    color: #b4c3de;
}
.dlg-body {
    height: 54px;
    background-color: #868b7f;
    display: flex;
    align-items: center;
    padding: 0 12px 6px 7px;
    color: #f0f0ec;
    font-size: 16.500px;
    white-space: nowrap;
}
.dlg-text {
    flex: 1;
}
.dlg-btn {
    width: 101px;
    height: 37px;
    line-height: 37px;
    text-align: center;
    background-color: #636363;
    border-radius: 4px;
    font-size: 17px;
}
.format {
    margin-top: 23px !important;
    line-height: 30px;
}
.format code {
    font-size: 18.500px;
    padding: 3px 7px;
    margin-left: 3px;
}
.back {
    margin-top: 27px !important;
    line-height: 30px;
}
.back a {
    color: #1a62b8;
    text-decoration: none;
}
hr {
    margin: 49px 0 0;
    border: 0;
    height: 2px;
    background-color: #999;
}
.h-next {
    margin-top: 98px;
    line-height: 37px;
}

.scrollbar {
    width: 25px;
    height: 769px;
    background-color: #f1f1f1;
    position: relative;
}
.sb-arrow {
    width: 10px;
    height: 6px;
    position: absolute;
    left: 8px;
    top: 11px;
}
.sb-arrow.down {
    top: 755px;
}
.sb-mark {
    position: absolute;
    left: 0;
    top: 28px;
    width: 25px;
    height: 3px;
    background-color: #f0a050;
}
.sb-thumb {
    position: absolute;
    left: 0;
    top: 602px;
    width: 25px;
    height: 25px;
    background-color: #c1c1c1;
}

/* floating zoom tile */
.zoomtile {
    position: absolute;
    left: 1510px;
    top: 314px;
    width: 336px;
    height: 190px;
    background-color: #232323;
    box-shadow: 8px 10px 22px rgba(0, 0, 0, 0.5), 0 0 2px rgba(255, 255, 255, 0.3);
    color: white;
    font-family: "Open Sans", sans-serif;
}
.tile-name {
    padding: 74px 0 0 21px;
    font-size: 33px;
    font-weight: 700;
    line-height: 44px;
    word-spacing: 5px;
    white-space: nowrap;
}
.tile-label {
    position: absolute;
    left: 0;
    bottom: 0;
    width: 263px;
    height: 30px;
    background-color: #2b2b2b;
    display: flex;
    align-items: center;
    font-size: 18px;
    padding-left: 6px;
    white-space: nowrap;
}
.tile-label svg {
    width: 18px;
    height: 22px;
    margin-right: 10px;
}

/* taskbar */
.taskbar {
    height: 72px;
    flex: none;
    background: linear-gradient(to right, #181d5c 0, #152455 300px, #11303a 700px, #132c30 100%);
    color: white;
    display: flex;
    align-items: center;
    position: relative;
    font-size: 17px;
}
.weather {
    display: flex;
    align-items: center;
    margin-left: 30px;
    width: 503px;
}
.weather svg {
    width: 38px;
    height: 34px;
    margin-right: 9px;
}
.temp {
    font-size: 17px;
    line-height: 24px;
}
.cond {
    font-size: 17.500px;
    line-height: 25px;
    color: #d8dcea;
}
.task-center {
    display: flex;
    align-items: center;
    height: 72px;
}
.win {
    width: 35px;
    height: 35px;
}
.search {
    width: 149px;
    height: 48px;
    margin-left: 21px;
    border-radius: 24px;
    background-color: #243b44;
    display: flex;
    align-items: center;
    padding-left: 34px;
    font-size: 17px;
}
.search svg {
    width: 20px;
    height: 20px;
    margin-right: 7px;
}
.app {
    position: relative;
    height: 72px;
    display: flex;
    align-items: center;
    justify-content: center;
}
.app svg {
    width: 36px;
    height: 36px;
}
.app-view {
    margin-left: 19px;
    width: 37px;
}
.app-view svg {
    height: 34px;
}
.app-meet {
    margin-left: 29px;
    width: 34px;
}
.app-mail {
    margin-left: 32px;
    width: 36px;
}
.app-mail svg {
    height: 34px;
}
.app-files {
    margin-left: 29px;
    width: 37px;
}
.app-files svg {
    height: 33px;
}
.app-chrome {
    width: 60px;
    margin-left: 18px;
    height: 60px;
    border-radius: 6px;
    background-color: #233a3d;
}
.app-chrome svg {
    width: 36px;
    height: 36px;
    margin-top: 0;
}
.app-teams {
    margin-left: 17px;
    width: 36px;
}
.app-zoom {
    margin-left: 31px;
    width: 36px;
}
.app-gear {
    margin-left: 30px;
    width: 36px;
}
.app-ij {
    margin-left: 33px;
    width: 30px;
}
.app-ij svg {
    width: 30px;
    height: 30px;
}
.app-book {
    margin-left: 35px;
    width: 32px;
}
.app-book svg {
    width: 32px;
    height: 30px;
}
.dot {
    position: absolute;
    bottom: 6px;
    left: 50%;
    margin-left: -4.500px;
    width: 9px;
    height: 5px;
    border-radius: 3px;
    background-color: #8a9494;
}
.bar {
    position: absolute;
    bottom: 2px;
    left: 18px;
    width: 24px;
    height: 4px;
    border-radius: 2px;
    background-color: #4cc2ff;
}
.chrome-badge {
    position: absolute;
    left: 32px;
    top: 5px;
    width: 24px;
    height: 24px;
    border-radius: 50%;
    background-color: #e8710a;
    text-align: center;
    font-size: 13px;
    font-weight: 400;
    line-height: 24px;
    color: #f6d2b0;
}
.teams-ok {
    position: absolute;
    right: -7px;
    top: 19px;
    width: 15px;
    height: 15px;
    border-radius: 50%;
    background-color: #7fb02e;
    border: 1px solid #dfe8d0;
    font-size: 10px;
    text-align: center;
    line-height: 13px;
}
.zoom-text {
    position: absolute;
    left: 0;
    width: 36px;
    text-align: center;
    font-size: 10px;
    font-family: "Liberation Sans", sans-serif;
}
.ij-text {
    position: absolute;
    left: 7px;
    top: 24px;
    font-family: "Liberation Mono", monospace;
    font-size: 14px;
    letter-spacing: -1px;
}
.tray {
    position: absolute;
    left: 1436px;
    top: 0;
    height: 72px;
    width: 484px;
    display: flex;
    align-items: center;
    font-size: 17px;
}
.chev {
    width: 18px;
    height: 10px;
    margin-left: 1px;
}
.sync {
    width: 24px;
    height: 25px;
    margin-left: 27px;
}
.drop {
    width: 22px;
    height: 19px;
    margin-left: 25px;
}
.micloc {
    width: 30px;
    height: 23px;
    margin-left: 22px;
}
.lang {
    width: 60px;
    margin-left: 12px;
    text-align: center;
    line-height: 24px;
}
.wifi {
    width: 24px;
    height: 17px;
    margin-left: 15px;
}
.vol {
    width: 24px;
    height: 19px;
    margin-left: 12px;
}
.batt {
    width: 24px;
    height: 19px;
    margin-left: 12px;
}
.clock {
    margin-left: auto;
    margin-right: 27px;
    text-align: right;
    line-height: 24px;
    font-size: 16.500px;
}
```
